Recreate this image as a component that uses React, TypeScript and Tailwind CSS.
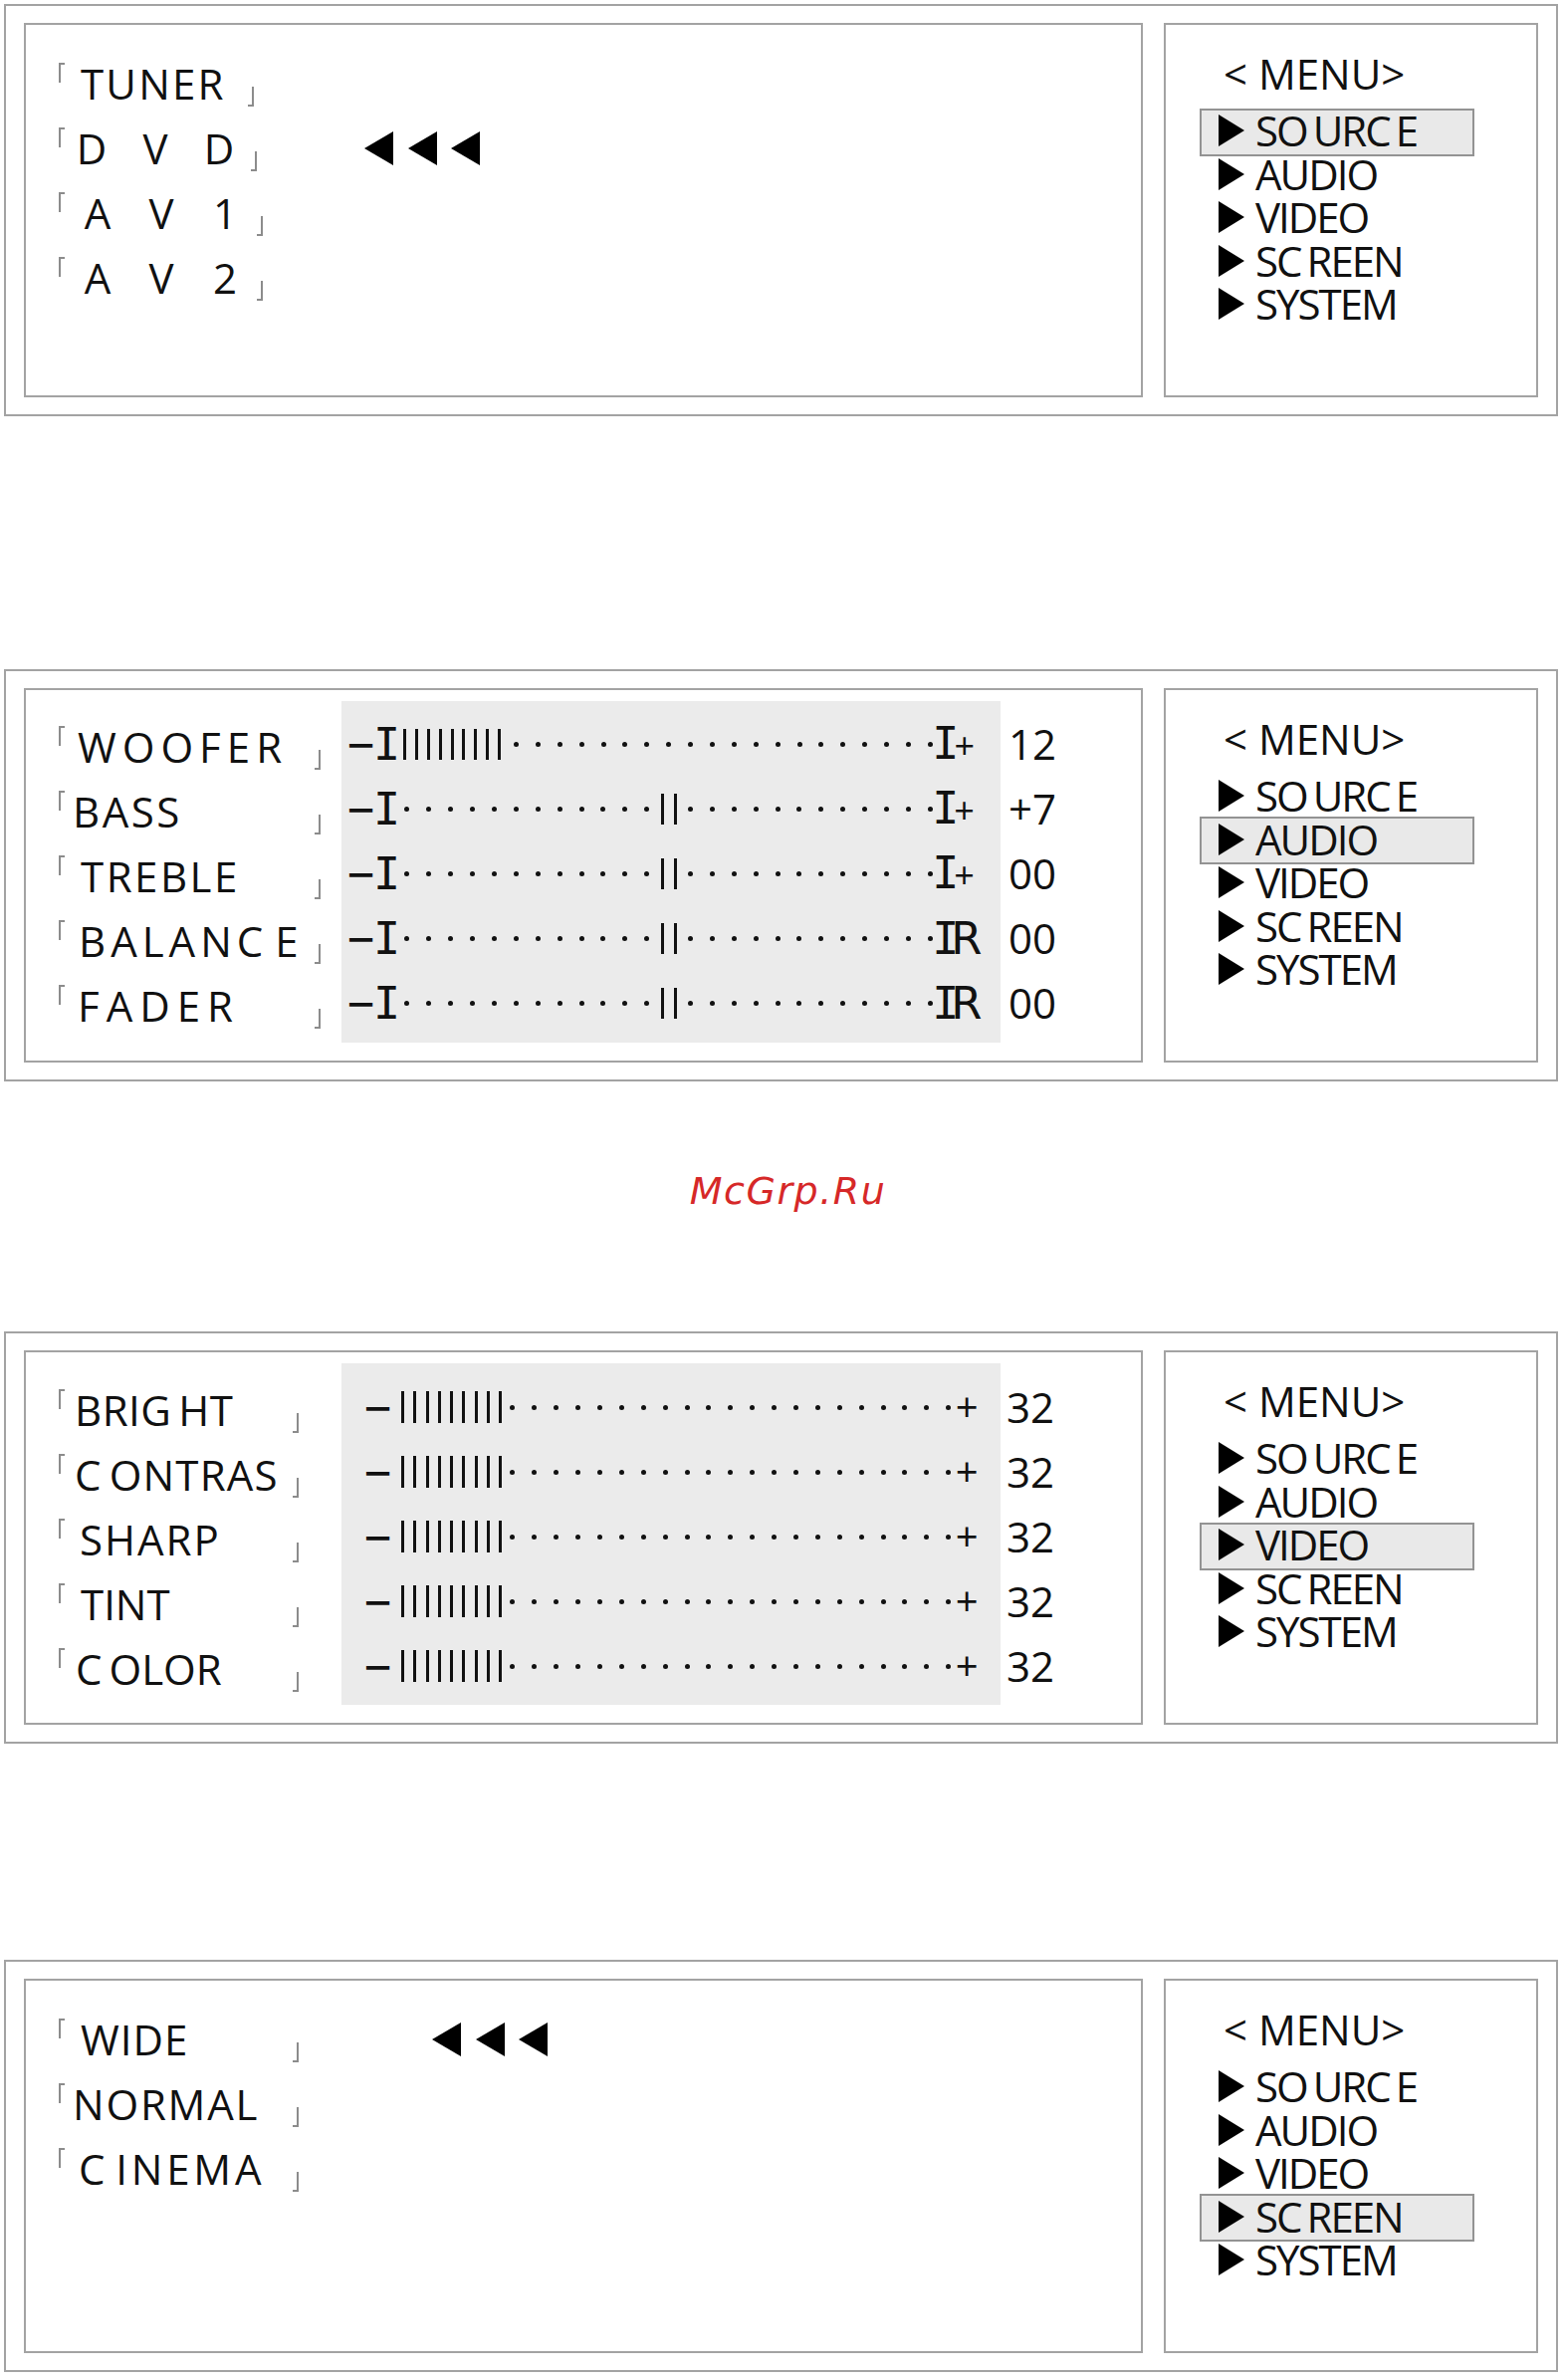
import React from 'react';

const SANS = "font-['Open_Sans',sans-serif]";
const MONO = "font-['DejaVu_Sans_Mono',monospace]";

const range = (n: number) => Array.from({ length: n }, (_, i) => i);

type LabelSpec = { parts: string[]; cls: string };

const MENU_ITEMS: string[][] = [['SO', 'URC', 'E'], ['AUDIO'], ['VIDEO'], ['SC', 'REEN'], ['SYSTEM']];

// corner marks around each OSD label
const OpenMark = () => (
  <span className="mt-[12px] h-[20px] w-[6px] shrink-0 self-start border-l-2 border-t-2 border-[#8c8c8c]" />
);
const CloseMark = () => (
  <span className="ml-auto mt-[36px] h-[20px] w-[6px] shrink-0 self-start border-b-2 border-r-2 border-[#8c8c8c]" />
);

const Label: React.FC<{ spec: LabelSpec; width: string }> = ({ spec, width }) => (
  <div className={`flex h-[65px] shrink-0 ${width}`}>
    <OpenMark />
    <span className={`whitespace-nowrap text-[42px] leading-[65px] ${spec.cls}`}>
      {spec.parts.map((p, i) => (
        <span key={i} className={i > 0 ? 'ml-[7px]' : ''}>
          {p}
        </span>
      ))}
    </span>
    <CloseMark />
  </div>
);

const SpacedLabel: React.FC<{ chars: string[]; offset: string }> = ({ chars, offset }) => (
  <div className="flex h-[65px] w-[196px] shrink-0">
    <OpenMark />
    <span className={`flex text-[42px] leading-[65px] ${offset}`}>
      {chars.map((c, i) => (
        <span key={i} className="w-[64px] text-center">
          {c}
        </span>
      ))}
    </span>
    <CloseMark />
  </div>
);

const LeftArrows: React.FC<{ offset: string }> = ({ offset }) => (
  <div className={`flex gap-[14.5px] ${offset}`}>
    {range(3).map((i) => (
      <svg key={i} width="29" height="34" viewBox="0 0 29 34">
        <polygon points="0,17 29,0 29,34" fill="#000" />
      </svg>
    ))}
  </div>
);

const Menu: React.FC<{ active: number }> = ({ active }) => (
  <div className="h-[376px] w-[376px] shrink-0 border-2 border-[#a3a3a3] pt-[27px]">
    <div className="whitespace-pre pl-[58px] text-[42px] leading-[44px]">{'< MENU>'}</div>
    <div className="mt-[15px] flex flex-col">
      {MENU_ITEMS.map((parts, i) => (
        <div
          key={i}
          className={
            i === active
              ? 'ml-[34px] -my-[2.25px] flex h-[48px] w-[276px] items-center border-2 border-[#939393] bg-[#e9e9e9] pb-[3px]'
              : 'ml-[34px] flex h-[43.5px] w-[276px] items-center border-2 border-transparent pb-[3px]'
          }
        >
          <svg className="ml-[17px] shrink-0" width="26" height="32" viewBox="0 0 26 32">
            <polygon points="0,0 26,16 0,32" fill="#000" />
          </svg>
          <span className="ml-[11px] whitespace-nowrap text-[42px] leading-[38px] tracking-[-2px]">
            {parts.map((p, j) => (
              <span key={j} className={j > 0 ? 'ml-[6px]' : ''}>
                {p}
              </span>
            ))}
          </span>
        </div>
      ))}
    </div>
  </div>
);

const Panel: React.FC<{ active: number; className?: string; children: React.ReactNode }> = ({
  active,
  className = '',
  children,
}) => (
  <div
    className={`ml-[4px] flex h-[414px] w-[1561px] gap-[21px] border-2 border-[#a3a3a3] px-[18px] py-[17px] ${className}`}
  >
    <div className="h-[376px] w-[1124px] shrink-0 border-2 border-[#a3a3a3]">{children}</div>
    <Menu active={active} />
  </div>
);

const Dot = () => (
  <span className="flex w-[21.9px] shrink-0 justify-center">
    <span className="h-[5px] w-[5px] rounded-full bg-[#111]" />
  </span>
);
const Tick = () => <span className="h-[31px] w-[3px] shrink-0 bg-[#111]" />;

const AudioBar: React.FC<{ low: boolean; end: string }> = ({ low, end }) => (
  <div className="flex h-[65px] items-center whitespace-nowrap pb-[5px]">
    <span className={`${MONO} ml-[6px] w-[49px] shrink-0 text-[45px] leading-[45px] tracking-[-1px]`}>−I</span>
    {low ? (
      <>
        <span className="flex w-[109.5px] shrink-0 gap-[8.875px] pl-[7px]">
          {range(9).map((i) => (
            <Tick key={i} />
          ))}
        </span>
        {range(20).map((i) => (
          <Dot key={i} />
        ))}
      </>
    ) : (
      <>
        {range(12).map((i) => (
          <Dot key={i} />
        ))}
        <span className="flex w-[21.9px] shrink-0 justify-center gap-[10px]">
          <Tick />
          <Tick />
        </span>
        {range(12).map((i) => (
          <Dot key={i} />
        ))}
      </>
    )}
    {end === '+' ? (
      <span className={`${MONO} ml-[-9px] text-[45px] leading-[45px]`}>
        <span className="tracking-[-5px]">I</span>
        <span className={`${SANS} text-[36px]`}>+</span>
      </span>
    ) : (
      <span className={`${MONO} ml-[-9px] text-[45px] leading-[45px]`}>
        <span className="tracking-[-8px]">I</span>
        <span className="font-['DejaVu_Sans',sans-serif]">R</span>
      </span>
    )}
  </div>
);

const VideoBar = () => (
  <div className="flex h-[65px] items-center whitespace-nowrap pb-[5px]">
    <span className={`${MONO} ml-[23px] w-[33px] shrink-0 text-[45px] leading-[45px]`}>−</span>
    <span className="flex w-[105px] shrink-0 gap-[9.3px] pl-[4px]">
      {range(9).map((i) => (
        <span key={i} className="h-[32px] w-[3px] shrink-0 bg-[#111]" />
      ))}
    </span>
    {range(21).map((i) => (
      <Dot key={i} />
    ))}
    <span className="ml-[-4px] text-[40px] leading-[40px]">+</span>
  </div>
);

const AUDIO: { spec: LabelSpec; low: boolean; end: string; value: string }[] = [
  { spec: { parts: ['WOOFER'], cls: 'ml-[13px] tracking-[6px]' }, low: true, end: '+', value: '12' },
  { spec: { parts: ['BASS'], cls: 'ml-[8px] tracking-[2.5px]' }, low: false, end: '+', value: '+7' },
  { spec: { parts: ['TREBLE'], cls: 'ml-[16px] tracking-[2.5px]' }, low: false, end: '+', value: '00' },
  { spec: { parts: ['BALANC', 'E'], cls: 'ml-[14px] tracking-[5px]' }, low: false, end: 'R', value: '00' },
  { spec: { parts: ['FADER'], cls: 'ml-[13px] tracking-[7px]' }, low: false, end: 'R', value: '00' },
];

const VIDEO: LabelSpec[] = [
  { parts: ['BRIG', 'HT'], cls: 'ml-[10px] tracking-[0.5px]' },
  { parts: ['C', 'ONTRAS'], cls: 'ml-[10px] tracking-[1.2px]' },
  { parts: ['SHARP'], cls: 'ml-[15px] tracking-[2px]' },
  { parts: ['TINT'], cls: 'ml-[16px] tracking-[0px]' },
  { parts: ['C', 'OLOR'], cls: 'ml-[11px] tracking-[0px]' },
];

const SCREEN: LabelSpec[] = [
  { parts: ['WIDE'], cls: 'ml-[16px] tracking-[1px]' },
  { parts: ['NORMAL'], cls: 'ml-[8px] tracking-[1.8px]' },
  { parts: ['C', 'INEMA'], cls: 'ml-[14px] tracking-[3.8px]' },
];

export default function App() {
  return (
    <div className={`${SANS} w-[1571px] bg-white pb-[8px] pt-[4px] text-[#111]`}>
      {/* SOURCE */}
      <Panel active={0}>
        <div className="flex flex-col pl-[33px] pt-[26px]">
          <div className="flex h-[65px] items-center">
            <Label spec={{ parts: ['TUNER'], cls: 'ml-[16px] tracking-[2.2px]' }} width="w-[196px]" />
          </div>
          <div className="flex h-[65px] items-center">
            <SpacedLabel chars={['D', 'V', 'D']} offset="-ml-[5px]" />
            <LeftArrows offset="ml-[111px]" />
          </div>
          <div className="flex h-[65px] items-center">
            <SpacedLabel chars={['A', 'V', '1']} offset="ml-[1px]" />
          </div>
          <div className="flex h-[65px] items-center">
            <SpacedLabel chars={['A', 'V', '2']} offset="ml-[1px]" />
          </div>
        </div>
      </Panel>

      {/* AUDIO */}
      <Panel active={1} className="mt-[254px]">
        <div className="flex items-start pl-[33px] pt-[24px]">
          <div className="flex w-[263px] flex-col">
            {AUDIO.map((r, i) => (
              <Label key={i} spec={r.spec} width="w-[263px]" />
            ))}
          </div>
          <div className="-mt-[13px] ml-[21px] flex w-[662px] flex-col bg-[#ebebeb] pb-[5px] pt-[13px]">
            {AUDIO.map((r, i) => (
              <AudioBar key={i} low={r.low} end={r.end} />
            ))}
          </div>
          <div className="-mt-[3px] ml-[8px] flex flex-col">
            {AUDIO.map((r, i) => (
              <span key={i} className="h-[65px] text-[42px] leading-[65px]">
                {r.value}
              </span>
            ))}
          </div>
        </div>
      </Panel>

      <div className="flex h-[251px] justify-center pl-[12px] pt-[91px]">
        <span className="font-['DejaVu_Sans',sans-serif] text-[38px] italic leading-[38px] tracking-[1.5px] text-[#d62828]">
          McGrp.Ru
        </span>
      </div>

      {/* VIDEO */}
      <Panel active={2}>
        <div className="flex items-start pl-[33px] pt-[25px]">
          <div className="flex w-[241px] flex-col">
            {VIDEO.map((s, i) => (
              <Label key={i} spec={s} width="w-[241px]" />
            ))}
          </div>
          <div className="-mt-[14px] ml-[43px] flex w-[662px] flex-col bg-[#ebebeb] pb-[4px] pt-[14px]">
            {VIDEO.map((_, i) => (
              <VideoBar key={i} />
            ))}
          </div>
          <div className="-mt-[3px] ml-[6px] flex flex-col">
            {VIDEO.map((_, i) => (
              <span key={i} className="h-[65px] text-[42px] leading-[65px]">
                32
              </span>
            ))}
          </div>
        </div>
      </Panel>

      {/* SCREEN */}
      <Panel active={3} className="mt-[217px]">
        <div className="flex flex-col pl-[33px] pt-[26px]">
          {SCREEN.map((s, i) => (
            <div key={i} className="flex h-[65px] items-center">
              <Label spec={s} width="w-[241px]" />
              {i === 0 && <LeftArrows offset="ml-[134px]" />}
            </div>
          ))}
        </div>
      </Panel>
    </div>
  );
}
